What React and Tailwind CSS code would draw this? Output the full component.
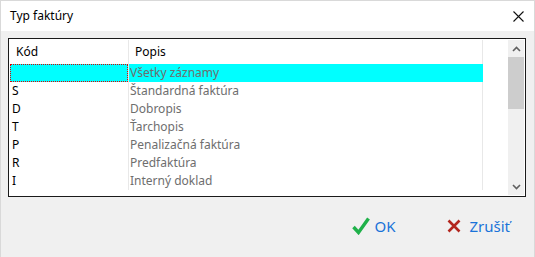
const rows = [
    { kod: "", popis: "Všetky záznamy" },
    { kod: "S", popis: "Štandardná faktúra" },
    { kod: "D", popis: "Dobropis" },
    { kod: "T", popis: "Ťarchopis" },
    { kod: "P", popis: "Penalizačná faktúra" },
    { kod: "R", popis: "Predfaktúra" },
    { kod: "I", popis: "Interný doklad" },
];

const App = () => {
    return (
        <div className="w-[535px] h-[257px] bg-[#f0f0f0] border-x border-t border-[#d9d9d9] flex flex-col font-['Noto_Sans',sans-serif] overflow-hidden">
            {/* title bar */}
            <div className="h-[30px] bg-white flex items-center justify-between pl-[9px] pr-[10px] shrink-0">
                <span className="text-[12px] text-black">Typ faktúry</span>
                <svg width="11" height="11" viewBox="0 0 11 11">
                    <path d="M0.5 0.5 L10.5 10.5 M10.5 0.5 L0.5 10.5" stroke="#111" strokeWidth="1.1" />
                </svg>
            </div>

            {/* list */}
            <div className="pl-[7px] pt-[7px]">
                <div className="w-[518px] h-[159px] border border-[#1a1a1a] bg-white flex p-[1px]">
                    <div className="w-[499px] flex flex-col">
                        <div className="h-[24px] flex text-[12px] text-black shrink-0">
                            <div className="w-[118px] pl-[6px] flex items-center">Kód</div>
                            <div className="w-[355px] pl-[6px] flex items-center border-l border-r border-[#e8e8e8]">Popis</div>
                        </div>
                        {rows.map((r, i) => (
                            <div key={i} className="h-[18px] flex text-[12px] leading-[18px]">
                                <div
                                    className={
                                        i === 0
                                            ? "w-[118px] bg-[#00ffff] border border-dotted border-[#e00000]"
                                            : "w-[118px] pl-[2px] text-black"
                                    }
                                >
                                    {r.kod}
                                </div>
                                <div
                                    className={
                                        i === 0
                                            ? "w-[355px] pl-[1px] text-[#6e6e6e] bg-[#00ffff] border-l border-[#e8e8e8]"
                                            : "w-[355px] pl-[1px] text-[#6e6e6e] border-l border-r border-[#e8e8e8]"
                                    }
                                >
                                    {r.popis}
                                </div>
                            </div>
                        ))}
                    </div>

                    {/* scrollbar */}
                    <div className="w-[16px] bg-[#f0f0f0] flex flex-col">
                        <div className="h-[17px] flex items-center justify-center">
                            <svg width="9" height="6" viewBox="0 0 9 6">
                                <path d="M1 5 L4.5 1.5 L8 5" fill="none" stroke="#606060" strokeWidth="1.6" />
                            </svg>
                        </div>
                        <div className="h-[52px] bg-[#cdcdcd]" />
                        <div className="flex-1" />
                        <div className="h-[17px] flex items-center justify-center">
                            <svg width="9" height="6" viewBox="0 0 9 6">
                                <path d="M1 1 L4.5 4.5 L8 1" fill="none" stroke="#606060" strokeWidth="1.6" />
                            </svg>
                        </div>
                    </div>
                </div>
            </div>

            {/* buttons */}
            <div className="flex-1 flex items-center justify-end pr-[24px] gap-[52px] pb-[2px]">
                <div className="flex items-center gap-[4px]">
                    <svg width="18" height="18" viewBox="0 0 18 18">
                        <path d="M1.5 10 L6.5 15.5 L16.5 1.5" fill="none" stroke="#1fb14a" strokeWidth="3.4" strokeLinejoin="miter" />
                    </svg>
                    <span className="text-[15px] text-[#1a73d9]">OK</span>
                </div>
                <div className="flex items-center gap-[8px]">
                    <svg width="14" height="14" viewBox="0 0 14 14">
                        <path d="M1.5 1.5 L12.5 12.5 M12.5 1.5 L1.5 12.5" stroke="#b3261e" strokeWidth="2.6" />
                    </svg>
                    <span className="text-[15px] text-[#1a73d9]">Zrušiť</span>
                </div>
            </div>
        </div>
    );
};

export default App;
